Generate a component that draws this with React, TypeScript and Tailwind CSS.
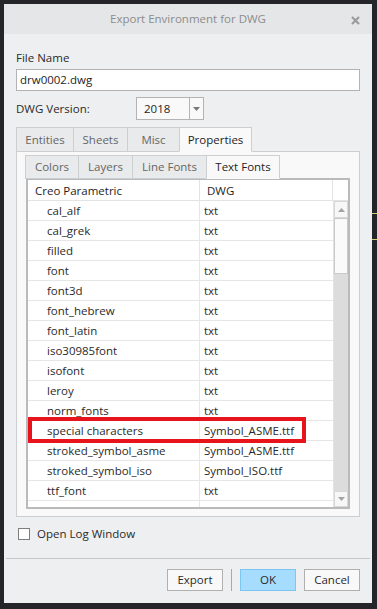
const rows: [string, string][] = [
  ["cal_alf", "txt"],
  ["cal_grek", "txt"],
  ["filled", "txt"],
  ["font", "txt"],
  ["font3d", "txt"],
  ["font_hebrew", "txt"],
  ["font_latin", "txt"],
  ["iso30985font", "txt"],
  ["isofont", "txt"],
  ["leroy", "txt"],
  ["norm_fonts", "txt"],
  ["special characters", "Symbol_ASME.ttf"],
  ["stroked_symbol_asme", "Symbol_ASME.ttf"],
  ["stroked_symbol_iso", "Symbol_ISO.ttf"],
  ["ttf_font", "txt"],
  ["", ""],
];

function Tab({ label, active, w }: { label: string; active?: boolean; w: string }) {
  return (
    <div
      className={
        "h-full flex items-center justify-center border border-[#cdcecf] -ml-px first:ml-0 " +
        w +
        (active ? " bg-[#f9f9fa] border-b-[#f9f9fa] text-[#1e1e1e] relative z-10" : " bg-[#e9eaeb] text-[#666]")
      }
    >
      {label}
    </div>
  );
}

export default function App() {
  return (
    <div className="w-[377px] h-[609px] bg-[#252428] relative pt-[4px] pl-[4px] font-['Open_Sans',sans-serif] text-[11.5px] text-[#2a2a2a]">
      {/* bits of the CAD window behind */}
      <div className="absolute left-[372px] top-[213px] w-[5px] h-px bg-[#d6cf7a]" />
      <div className="absolute left-[372px] top-[239px] w-[5px] h-px bg-[#d6cf7a]" />

      <div className="w-[368px] h-[599px] bg-[#eeeff1] flex flex-col">
        {/* title bar */}
        <div className="h-[30px] bg-[#e5e6e8] flex items-center justify-center relative shrink-0">
          <span className="text-[11.5px] text-[#8c8c8c]">Export Environment for DWG</span>
          <svg className="absolute right-[12px] top-[12px]" width="9" height="9" viewBox="0 0 9 9">
            <path d="M1 1L8 8M8 1L1 8" stroke="#9b9b9b" strokeWidth="2.2" />
          </svg>
        </div>

        <div className="px-[12px] flex flex-col">
          <div className="mt-[15px] leading-[18px]">File Name</div>
          <div className="mt-[2px] h-[22px] border border-[#b3b3b3] bg-white flex items-center px-[3px] text-[#1e1e1e]">
            drw0002.dwg
          </div>

          <div className="mt-[6px] flex items-center">
            <span className="w-[120px]">DWG Version:</span>
            <div className="h-[23px] w-[68px] border border-[#b3b3b3] bg-[#f9f9f9] flex">
              <div className="flex-1 flex items-center pl-[7px] text-[#1e1e1e]">2018</div>
              <div className="w-[14px] border-l border-[#b3b3b3] flex items-center justify-center">
                <svg width="7" height="4" viewBox="0 0 7 4">
                  <path d="M0 0H7L3.5 4Z" fill="#7a7a7a" />
                </svg>
              </div>
            </div>
          </div>

          {/* outer tabs */}
          <div className="mt-[7px] h-[25px] flex relative z-10 -mb-px">
            <Tab label="Entities" w="w-[58px]" />
            <Tab label="Sheets" w="w-[55px]" />
            <Tab label="Misc" w="w-[53px]" />
            <Tab label="Properties" active w="w-[73px]" />
          </div>

          <div className="h-[366px] border border-[#cdcecf] bg-[#f9f9fa] pt-[3px] pl-[8px] pr-[9px] flex flex-col">
            {/* inner tabs */}
            <div className="h-[24px] flex relative z-10 -mb-px">
              <Tab label="Colors" w="w-[54px]" />
              <Tab label="Layers" w="w-[55px]" />
              <Tab label="Line Fonts" w="w-[75px]" />
              <Tab label="Text Fonts" active w="w-[74px]" />
            </div>

            <div className="ml-px h-[331px] border-2 border-[#b9babb] bg-white flex flex-col relative">
              <div className="h-[21px] flex border-b border-[#e3e3e3] shrink-0">
                <div className="w-[172px] border-r border-[#e3e3e3] flex items-center pl-[7px] pt-px text-[#1e1e1e]">
                  Creo Parametric
                </div>
                <div className="w-[133px] border-r border-[#e3e3e3] flex items-center pl-[7px] pt-px text-[#1e1e1e]">
                  DWG
                </div>
                <div className="flex-1" />
              </div>
              <div className="flex flex-1 min-h-0 relative">
                <div className="w-[305px] overflow-hidden">
                  {rows.map(([a, b], i) => (
                    <div key={i} className="h-[20px] flex border-b border-[#e6e6e6]">
                      <div className="w-[172px] border-r border-[#e6e6e6] flex items-center pl-[19px] pt-px">
                        {a}
                      </div>
                      <div className="flex-1 flex items-center pl-[4px] pt-px">{b}</div>
                    </div>
                  ))}
                </div>
                <div className="w-[15px] flex flex-col bg-[#dcdcdc] border-l border-[#e3e3e3]">
                  <div className="h-[17px] bg-[#f7f7f7] border border-[#d8d8d8] flex items-center justify-center">
                    <svg width="7" height="4" viewBox="0 0 7 4">
                      <path d="M3.5 0L7 4H0Z" fill="#a3a3a3" />
                    </svg>
                  </div>
                  <div className="h-[56px] bg-[#fafafa] border border-[#c9c9c9]" />
                  <div className="flex-1" />
                  <div className="h-[16px] bg-[#f7f7f7] border border-[#d8d8d8] flex items-center justify-center">
                    <svg width="7" height="4" viewBox="0 0 7 4">
                      <path d="M0 0H7L3.5 4Z" fill="#a3a3a3" />
                    </svg>
                  </div>
                </div>
                {/* highlight box */}
                <div className="absolute left-0 top-[216px] w-[278px] h-[26px] border-4 border-[#e8141c]" />
              </div>
            </div>
          </div>

          <div className="mt-[10px] flex items-center h-[13px]">
            <div className="ml-[2px] w-[12px] h-[12px] border border-[#7d7d7d] bg-white" />
            <span className="ml-[7px]">Open Log Window</span>
          </div>
        </div>

        <div className="flex-1" />
        <div className="mx-[2px] h-px bg-[#c6c7c8]" />
        <div className="mt-[10px] mb-[12px] mr-[12px] flex justify-end items-center h-[22px]">
          <button className="w-[56px] h-[22px] border border-[#b0b0b0] bg-[#f8f8f8]">Export</button>
          <div className="mx-[8px] w-px h-[22px] bg-[#a9a9a9]" />
          <button className="w-[56px] h-[22px] border border-[#7cc6f3] bg-[#a6dcfd]">OK</button>
          <button className="ml-[8px] w-[56px] h-[22px] border border-[#b0b0b0] bg-[#f8f8f8]">Cancel</button>
        </div>
      </div>
    </div>
  );
}
